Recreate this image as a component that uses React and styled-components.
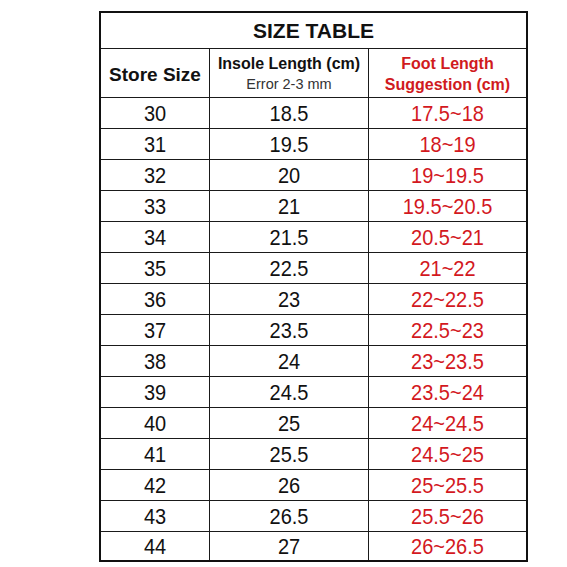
import React from "react";
import styled, { createGlobalStyle } from "styled-components";

const Global = createGlobalStyle`
  html, body { margin: 0; padding: 0; background: #ffffff; }
  body { font-family: "Liberation Sans", Arial, sans-serif; }
  * { box-sizing: border-box; }
`;

const Page = styled.div`
  width: 567px;
  height: 567px;
  padding: 11px 0 0 99px;
  background: #fff;
`;

const Sheet = styled.div`
  width: 429px;
  display: grid;
  grid-template-columns: 109px 159px 157px;
  grid-template-rows: 36px 49px repeat(14, 31px) 28px;
  border: 2px solid #111;
  color: #111;
`;

const BaseCell = styled.div`
  display: flex;
  flex-direction: column;
  align-items: center;
  justify-content: center;
  text-align: center;
  border-right: ${(p) => (p.$lastCol ? "none" : "1px solid #1a1a1a")};
  border-bottom: ${(p) => (p.$lastRow ? "none" : "1px solid #1a1a1a")};
  white-space: nowrap;
`;

const TitleCell = styled(BaseCell)`
  grid-column: 1 / span 3;
  font-size: 21px;
  font-weight: 700;
  padding-top: 1px;
  letter-spacing: 0;
`;

const HeadCell = styled(BaseCell)`
  font-weight: 700;
  font-size: ${(p) => (p.$big ? "19px" : "16px")};
  line-height: 21px;
  color: ${(p) => (p.$red ? "#d01a20" : "#111")};
  padding-top: 2px;
`;

const SubNote = styled.span`
  font-weight: 400;
  font-size: 14.5px;
  color: #333;
`;

const Cell = styled(BaseCell)`
  font-size: 20px;
  color: ${(p) => (p.$red ? "#d3181e" : "#111")};
  padding-top: 1px;
`;

const Num = styled.span`
  display: inline-block;
  transform: scaleY(1.08);
`;

const rows = [
  ["30", "18.5", "17.5~18"],
  ["31", "19.5", "18~19"],
  ["32", "20", "19~19.5"],
  ["33", "21", "19.5~20.5"],
  ["34", "21.5", "20.5~21"],
  ["35", "22.5", "21~22"],
  ["36", "23", "22~22.5"],
  ["37", "23.5", "22.5~23"],
  ["38", "24", "23~23.5"],
  ["39", "24.5", "23.5~24"],
  ["40", "25", "24~24.5"],
  ["41", "25.5", "24.5~25"],
  ["42", "26", "25~25.5"],
  ["43", "26.5", "25.5~26"],
  ["44", "27", "26~26.5"],
];

export default function App() {
  return (
    <>
      <Global />
      <Page>
        <Sheet>
          <TitleCell $lastCol>SIZE TABLE</TitleCell>
          <HeadCell $big>Store Size</HeadCell>
          <HeadCell>
            <span>Insole Length (cm)</span>
            <SubNote>Error 2-3 mm</SubNote>
          </HeadCell>
          <HeadCell $red $lastCol>
            <span>Foot Length</span>
            <span>Suggestion (cm)</span>
          </HeadCell>
          {rows.map((r, i) => {
            const last = i === rows.length - 1;
            return (
              <React.Fragment key={r[0]}>
                <Cell $lastRow={last}>
                  <Num>{r[0]}</Num>
                </Cell>
                <Cell $lastRow={last}>
                  <Num>{r[1]}</Num>
                </Cell>
                <Cell $red $lastCol $lastRow={last}>
                  <Num>{r[2]}</Num>
                </Cell>
              </React.Fragment>
            );
          })}
        </Sheet>
      </Page>
    </>
  );
}
